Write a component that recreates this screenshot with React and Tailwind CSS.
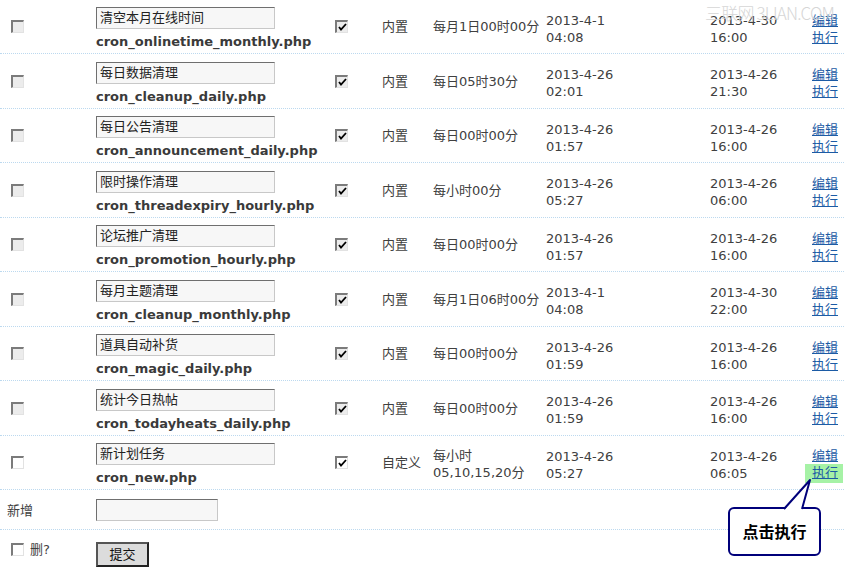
import React from 'react';

const rows = [
  { title: '清空本月在线时间', file: 'cron_onlinetime_monthly.php', type: '内置', when: ['每月1日00时00分'], last: ['2013-4-1', '04:08'], next: ['2013-4-30', '16:00'] },
  { title: '每日数据清理', file: 'cron_cleanup_daily.php', type: '内置', when: ['每日05时30分'], last: ['2013-4-26', '02:01'], next: ['2013-4-26', '21:30'] },
  { title: '每日公告清理', file: 'cron_announcement_daily.php', type: '内置', when: ['每日00时00分'], last: ['2013-4-26', '01:57'], next: ['2013-4-26', '16:00'] },
  { title: '限时操作清理', file: 'cron_threadexpiry_hourly.php', type: '内置', when: ['每小时00分'], last: ['2013-4-26', '05:27'], next: ['2013-4-26', '06:00'] },
  { title: '论坛推广清理', file: 'cron_promotion_hourly.php', type: '内置', when: ['每日00时00分'], last: ['2013-4-26', '01:57'], next: ['2013-4-26', '16:00'] },
  { title: '每月主题清理', file: 'cron_cleanup_monthly.php', type: '内置', when: ['每月1日06时00分'], last: ['2013-4-1', '04:08'], next: ['2013-4-30', '22:00'] },
  { title: '道具自动补货', file: 'cron_magic_daily.php', type: '内置', when: ['每日00时00分'], last: ['2013-4-26', '01:59'], next: ['2013-4-26', '16:00'] },
  { title: '统计今日热帖', file: 'cron_todayheats_daily.php', type: '内置', when: ['每日00时00分'], last: ['2013-4-26', '01:59'], next: ['2013-4-26', '16:00'] },
  { title: '新计划任务', file: 'cron_new.php', type: '自定义', when: ['每小时', '05,10,15,20分'], last: ['2013-4-26', '05:27'], next: ['2013-4-26', '06:05'], custom: true },
];

// 옛날 윈도우 스타일 체크박스
const Box = ({ checked, disabled }) => (
  <span className={`inline-flex items-center justify-center w-[13px] h-[13px] border-l-2 border-t-2 border-[#7b7b7b] border-r border-b border-r-[#e2e2e2] border-b-[#e2e2e2] ${disabled ? 'bg-[#ececec]' : 'bg-white'}`}>
    {checked && (
      <svg width="9" height="8" viewBox="0 0 9 8">
        <path d="M1 4 L3 6.5 L8 1" fill="none" stroke="#000" strokeWidth="1.8" />
      </svg>
    )}
  </span>
);

const cols = 'grid grid-cols-[96px_239px_47px_51px_113px_164px_102px_1fr] items-center';

export default function App() {
  return (
    <div className="relative w-[844px] h-[569px] overflow-hidden bg-white text-[13px] leading-[17px] text-[#404040]" style={{ fontFamily: '"DejaVu Sans", Verdana, "Noto Sans CJK SC", sans-serif' }}>
      {rows.map((r, i) => (
        <div key={i} className={`${cols} border-b border-dotted border-[#bcd9ef] ${i % 2 === 0 ? 'h-[54px]' : 'h-[55px]'}`}>
          <div className="pl-[11px] flex"><Box disabled={!r.custom} /></div>
          <div className="flex flex-col pt-[4px]">
            <div className="w-[179px] h-[22px] border-l border-t border-[#6f6f6f] border-r border-b border-r-[#c8c8c8] border-b-[#c8c8c8] bg-[#f7f7f7] pl-[3px] leading-[19px] text-[#222]">{r.title}</div>
            <div className="mt-[4px] font-bold text-[#3a3a3a]">{r.file}</div>
          </div>
          <div className="flex"><Box checked disabled={!r.custom} /></div>
          <div>{r.type}</div>
          <div className={r.when.length > 1 ? 'pt-[2px]' : ''}>{r.when.map((w) => <div key={w}>{w}</div>)}</div>
          <div className="pt-[4px]">{r.last.map((w) => <div key={w}>{w}</div>)}</div>
          <div className="pt-[4px]">{r.next.map((w) => <div key={w}>{w}</div>)}</div>
          <div className="flex flex-col items-start pt-[4px] whitespace-nowrap">
            <a className="text-[#1c5ba5] underline">编辑</a>
            {r.custom ? (
              <span className="-ml-[7px] pl-[7px] pr-[5px] pb-[2px] bg-[#a6f2a6]"><a className="text-[#1c5ba5] underline">执行</a></span>
            ) : (
              <a className="text-[#1c5ba5] underline">执行</a>
            )}
          </div>
        </div>
      ))}

      <div className="flex items-center h-[40px] border-b border-dotted border-[#bcd9ef]">
        <div className="w-[96px] pl-[7px] pt-[2px]">新增</div>
        <div className="w-[122px] h-[22px] border-l border-t border-[#6f6f6f] border-r border-b border-r-[#c8c8c8] border-b-[#c8c8c8] bg-[#f7f7f7]"></div>
      </div>

      <div className="flex items-center h-[39px]">
        <div className="w-[96px] pl-[11px] flex items-center gap-[6px]">
          <Box />
          <span>删?</span>
        </div>
        <button className="mt-[10px] w-[53px] h-[25px] border-2 border-[#222] border-t-[#555] border-l-[#555] bg-[#dcdcdc] text-[13px] text-[#111] leading-none">提交</button>
      </div>

      {/* watermark */}
      <div className="absolute left-[705px] top-[3px] whitespace-nowrap text-[17px] leading-[20px] text-[#d6d6d6] tracking-[-0.8px]" style={{ fontFamily: '"Noto Sans CJK SC", sans-serif', fontWeight: 300 }}>
        三联网 3LIAN.COM
      </div>

      {/* callout */}
      <div className="absolute left-[728px] top-[507px] w-[93px] h-[49px] border-2 border-[#00007a] rounded-[6px] bg-white flex items-center justify-center font-bold text-[16px] text-black" style={{ fontFamily: '"Noto Sans CJK SC", sans-serif' }}>
        点击执行
      </div>
      <svg className="absolute left-[780px] top-[478px]" width="36" height="34" viewBox="0 0 36 34">
        <polygon points="5,31 22,31 30,2" fill="#fff" />
        <polyline points="4,31 30,2 22,31" fill="none" stroke="#00007a" strokeWidth="2" strokeLinejoin="round" />
      </svg>
    </div>
  );
}
